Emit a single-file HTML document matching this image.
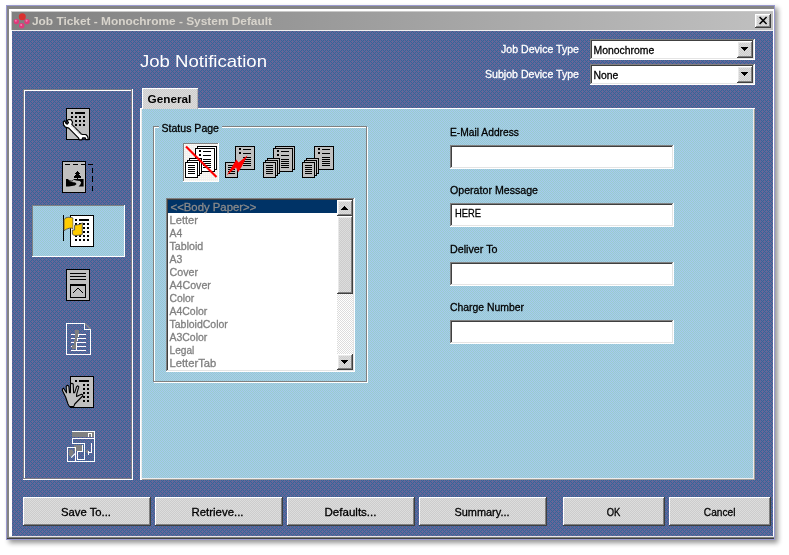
<!DOCTYPE html>
<html><head><meta charset="utf-8"><title>Job Ticket</title>
<style>
html,body{margin:0;padding:0;background:#fff;}
body{width:789px;height:555px;overflow:hidden;position:relative;}
svg{will-change:transform;position:absolute;left:0;top:0;display:block}
text{font-family:"Liberation Sans",sans-serif;white-space:pre;stroke-width:.3px}
</style></head><body>
<svg width="789" height="555" viewBox="0 0 789 555" shape-rendering="crispEdges">
<defs>
<pattern id="pb" x="12" y="31" width="4" height="4" patternUnits="userSpaceOnUse"><rect width="4" height="4" fill="#666699"/><path d="M0 0h1v1h-1zM1 1h1v1h-1zM2 2h1v1h-1zM3 3h1v1h-1zM1 3h1v1h-1zM3 1h1v1h-1z" fill="#336699"/></pattern>
<pattern id="pc" width="2" height="2" patternUnits="userSpaceOnUse"><rect width="2" height="2" fill="#a6caf0"/><path d="M0 0h1v1h-1zM1 1h1v1h-1z" fill="#99cccc"/></pattern>
<pattern id="pg" width="2" height="2" patternUnits="userSpaceOnUse"><rect width="2" height="2" fill="#cccccc"/><path d="M0 0h1v1h-1zM1 1h1v1h-1z" fill="#dddddd"/></pattern>
<pattern id="ps" width="2" height="2" patternUnits="userSpaceOnUse"><rect width="2" height="2" fill="#f0f0f0"/><path d="M0 0h1v1h-1z" fill="#fffbf0"/></pattern>
<pattern id="pt" width="2" height="2" patternUnits="userSpaceOnUse"><rect width="2" height="2" fill="#ffffff"/><path d="M0 0h1v1h-1zM1 1h1v1h-1z" fill="#dcdcdc"/></pattern>
<linearGradient id="tg" x1="0" x2="1" y1="0" y2="0"><stop offset="0" stop-color="#808080"/><stop offset="1" stop-color="#c0c0c0"/></linearGradient>
<filter id="sh" x="-5%" y="-5%" width="110%" height="110%"><feGaussianBlur stdDeviation="2.5"/></filter>
</defs>
<rect x="9" y="8" width="769" height="535" fill="#000" opacity=".42" filter="url(#sh)" shape-rendering="auto"/>
<rect x="6" y="5" width="769" height="535" fill="#9a9ace"/>
<rect x="7" y="6" width="767" height="533" fill="#848484"/>
<rect x="7" y="538" width="767" height="1" fill="#404040"/>
<rect x="7" y="537" width="767" height="1" fill="#808080"/>
<rect x="9" y="9" width="765" height="527" fill="#fff"/>
<rect x="9" y="536" width="765" height="1" fill="#e8e8e8"/>
<rect x="11" y="11" width="762" height="19" fill="#c8c8c8"/>
<rect x="12" y="12" width="761" height="18" fill="url(#tg)"/>
<rect x="12" y="30" width="761" height="1" fill="#f0f0f0"/>
<rect x="12" y="31" width="761" height="505" fill="url(#pb)"/>
<g shape-rendering="auto"><circle cx="22.3" cy="16.7" r="3.5" fill="#d93030"/><circle cx="16.4" cy="21.6" r="2.7" fill="#e03a7a"/><circle cx="27" cy="21.6" r="2.7" fill="#e03a7a"/><circle cx="21.7" cy="25.8" r="2.7" fill="#e03a7a"/><circle cx="15.8" cy="20.8" r="1" fill="#f080b0"/><circle cx="26.6" cy="20.8" r="1" fill="#f080b0"/><circle cx="21.2" cy="25" r="1" fill="#f080b0"/></g>
<text x="32" y="25" font-size="11" fill="#d8d4cc" font-weight="bold" textLength="240" lengthAdjust="spacingAndGlyphs">Job Ticket - Monochrome - System Default</text>
<rect x="755" y="14" width="16" height="14" fill="#404040"/>
<rect x="755" y="14" width="15" height="13" fill="#fff"/>
<rect x="756" y="15" width="14" height="12" fill="#808080"/>
<rect x="756" y="15" width="13" height="11" fill="#e8e8e8"/>
<rect x="757" y="16" width="12" height="10" fill="url(#pg)"/>
<path d="M759.6 17 L766.6 24 M766.6 17 L759.6 24" stroke="#000" stroke-width="1.45" fill="none" shape-rendering="auto"/>
<text x="140" y="67" font-size="17" fill="#fff" textLength="127" lengthAdjust="spacingAndGlyphs">Job Notification</text>
<text x="579" y="53" font-size="11" fill="#fff" stroke="#fff" text-anchor="end" textLength="78" lengthAdjust="spacingAndGlyphs">Job Device Type</text>
<text x="579" y="78" font-size="11" fill="#fff" stroke="#fff" text-anchor="end" textLength="94" lengthAdjust="spacingAndGlyphs">Subjob Device Type</text>
<rect x="590" y="39" width="165" height="21" fill="#fff"/>
<rect x="590" y="39" width="164" height="20" fill="#808080"/>
<rect x="591" y="40" width="163" height="19" fill="#e4e4e4"/>
<rect x="591" y="40" width="162" height="18" fill="#404040"/>
<rect x="592" y="41" width="161" height="17" fill="#fff"/>
<rect x="737" y="41" width="16" height="17" fill="#404040"/>
<rect x="737" y="41" width="15" height="16" fill="#fff"/>
<rect x="738" y="42" width="14" height="15" fill="#808080"/>
<rect x="738" y="42" width="13" height="14" fill="#e8e8e8"/>
<rect x="739" y="43" width="12" height="13" fill="url(#pg)"/>
<path d="M741 47 h7 l-3.5 4z" fill="#000"/>
<text x="593.5" y="54" font-size="11" fill="#000" stroke="#000" textLength="60.7" lengthAdjust="spacingAndGlyphs">Monochrome</text>
<rect x="590" y="64" width="165" height="21" fill="#fff"/>
<rect x="590" y="64" width="164" height="20" fill="#808080"/>
<rect x="591" y="65" width="163" height="19" fill="#e4e4e4"/>
<rect x="591" y="65" width="162" height="18" fill="#404040"/>
<rect x="592" y="66" width="161" height="17" fill="#fff"/>
<rect x="737" y="66" width="16" height="17" fill="#404040"/>
<rect x="737" y="66" width="15" height="16" fill="#fff"/>
<rect x="738" y="67" width="14" height="15" fill="#808080"/>
<rect x="738" y="67" width="13" height="14" fill="#e8e8e8"/>
<rect x="739" y="68" width="12" height="13" fill="url(#pg)"/>
<path d="M741 72 h7 l-3.5 4z" fill="#000"/>
<text x="593.5" y="79" font-size="11" fill="#000" stroke="#000" textLength="24.8" lengthAdjust="spacingAndGlyphs">None</text>
<rect x="24" y="90" width="109" height="1" fill="#fff"/>
<rect x="23" y="479" width="110" height="1" fill="#fff"/>
<rect x="24" y="90" width="1" height="390" fill="#fff"/>
<rect x="132" y="89" width="1" height="391" fill="#fff"/>
<rect x="23" y="89" width="109" height="1" fill="#7c7c84"/>
<rect x="23" y="89" width="1" height="390" fill="#7c7c84"/>
<rect x="23" y="478" width="109" height="1" fill="#7c7c84"/>
<rect x="131" y="89" width="1" height="390" fill="#7c7c84"/>
<rect x="32" y="205" width="93" height="52" fill="#fff"/>
<rect x="32" y="205" width="92" height="51" fill="#808080"/>
<rect x="33" y="206" width="91" height="50" fill="url(#pc)"/>
<rect x="142" y="88" width="56" height="21" fill="#fff"/>
<rect x="143" y="89" width="55" height="20" fill="#b0b0b0"/>
<rect x="143" y="89" width="54" height="20" fill="url(#pg)"/>
<text x="147.6" y="103" font-size="11" fill="#000" font-weight="bold" textLength="43.8" lengthAdjust="spacingAndGlyphs">General</text>
<rect x="140" y="108" width="2" height="372" fill="#fff"/>
<rect x="198" y="108" width="557" height="1" fill="#fff"/>
<rect x="140" y="108" width="3" height="1" fill="#fff"/>
<rect x="142" y="109" width="613" height="371" fill="#a09c94"/>
<rect x="141" y="109" width="613" height="370" fill="#ececec"/>
<rect x="142" y="109" width="611" height="369" fill="url(#pc)"/>
<rect x="143" y="88" width="54" height="1" fill="#fff"/>
<rect x="154" y="127" width="1" height="256" fill="#fff"/>
<rect x="367" y="127" width="1" height="256" fill="#fff"/>
<rect x="154" y="382" width="214" height="1" fill="#fff"/>
<rect x="154" y="127" width="5" height="1" fill="#fff"/>
<rect x="222" y="127" width="146" height="1" fill="#fff"/>
<rect x="153" y="126" width="1" height="256" fill="#808080"/>
<rect x="366" y="126" width="1" height="256" fill="#808080"/>
<rect x="153" y="381" width="214" height="1" fill="#808080"/>
<rect x="153" y="126" width="6" height="1" fill="#808080"/>
<rect x="222" y="126" width="145" height="1" fill="#808080"/>
<text x="161.5" y="132" font-size="11" fill="#000" stroke="#000" textLength="57.5" lengthAdjust="spacingAndGlyphs">Status Page</text>
<rect x="166" y="198" width="189" height="174" fill="#fff"/>
<rect x="166" y="198" width="188" height="173" fill="#808080"/>
<rect x="167" y="199" width="187" height="172" fill="#e4e4e4"/>
<rect x="167" y="199" width="186" height="171" fill="#404040"/>
<rect x="168" y="200" width="185" height="170" fill="#fff"/>
<rect x="168" y="200" width="169" height="13" fill="#003366"/>
<text x="170.5" y="211" font-size="11" fill="#8a8a8a" stroke="#8a8a8a" textLength="85.8" lengthAdjust="spacingAndGlyphs">&lt;&lt;Body Paper&gt;&gt;</text>
<text x="169.5" y="224" font-size="11" fill="#808080" stroke="#808080" textLength="28.5" lengthAdjust="spacingAndGlyphs">Letter</text>
<text x="169.5" y="237" font-size="11" fill="#808080" stroke="#808080" textLength="12.8" lengthAdjust="spacingAndGlyphs">A4</text>
<text x="169.5" y="250" font-size="11" fill="#808080" stroke="#808080" textLength="33.8" lengthAdjust="spacingAndGlyphs">Tabloid</text>
<text x="169.5" y="263" font-size="11" fill="#808080" stroke="#808080" textLength="12.8" lengthAdjust="spacingAndGlyphs">A3</text>
<text x="169.5" y="276" font-size="11" fill="#808080" stroke="#808080" textLength="28.5" lengthAdjust="spacingAndGlyphs">Cover</text>
<text x="169.5" y="289" font-size="11" fill="#808080" stroke="#808080" textLength="41.4" lengthAdjust="spacingAndGlyphs">A4Cover</text>
<text x="169.5" y="302" font-size="11" fill="#808080" stroke="#808080" textLength="24.8" lengthAdjust="spacingAndGlyphs">Color</text>
<text x="169.5" y="315" font-size="11" fill="#808080" stroke="#808080" textLength="37.8" lengthAdjust="spacingAndGlyphs">A4Color</text>
<text x="169.5" y="328" font-size="11" fill="#808080" stroke="#808080" textLength="58.3" lengthAdjust="spacingAndGlyphs">TabloidColor</text>
<text x="169.5" y="341" font-size="11" fill="#808080" stroke="#808080" textLength="37.8" lengthAdjust="spacingAndGlyphs">A3Color</text>
<text x="169.5" y="354" font-size="11" fill="#808080" stroke="#808080" textLength="24.8" lengthAdjust="spacingAndGlyphs">Legal</text>
<text x="169.5" y="367" font-size="11" fill="#808080" stroke="#808080" textLength="46.8" lengthAdjust="spacingAndGlyphs">LetterTab</text>
<rect x="337" y="200" width="16" height="170" fill="url(#pt)"/>
<rect x="337" y="200" width="16" height="16" fill="#404040"/>
<rect x="337" y="200" width="15" height="15" fill="#fff"/>
<rect x="338" y="201" width="14" height="14" fill="#808080"/>
<rect x="338" y="201" width="13" height="13" fill="#e8e8e8"/>
<rect x="339" y="202" width="12" height="12" fill="url(#pg)"/>
<path d="M341 210 h7 l-3.5 -4z" fill="#000"/>
<rect x="337" y="354" width="16" height="16" fill="#404040"/>
<rect x="337" y="354" width="15" height="15" fill="#fff"/>
<rect x="338" y="355" width="14" height="14" fill="#808080"/>
<rect x="338" y="355" width="13" height="13" fill="#e8e8e8"/>
<rect x="339" y="356" width="12" height="12" fill="url(#pg)"/>
<path d="M341 360 h7 l-3.5 4z" fill="#000"/>
<rect x="337" y="216" width="16" height="78" fill="#404040"/>
<rect x="337" y="216" width="15" height="77" fill="#fff"/>
<rect x="338" y="217" width="14" height="76" fill="#808080"/>
<rect x="338" y="217" width="13" height="75" fill="#e8e8e8"/>
<rect x="339" y="218" width="12" height="74" fill="url(#pg)"/>
<text x="450" y="136" font-size="11" fill="#000" stroke="#000" textLength="69" lengthAdjust="spacingAndGlyphs">E-Mail Address</text>
<rect x="450" y="145" width="224" height="24" fill="#fff"/>
<rect x="450" y="145" width="223" height="23" fill="#808080"/>
<rect x="451" y="146" width="222" height="22" fill="#e4e4e4"/>
<rect x="451" y="146" width="221" height="21" fill="#404040"/>
<rect x="452" y="147" width="220" height="20" fill="#fff"/>
<text x="450" y="194" font-size="11" fill="#000" stroke="#000" textLength="88" lengthAdjust="spacingAndGlyphs">Operator Message</text>
<rect x="450" y="203" width="224" height="24" fill="#fff"/>
<rect x="450" y="203" width="223" height="23" fill="#808080"/>
<rect x="451" y="204" width="222" height="22" fill="#e4e4e4"/>
<rect x="451" y="204" width="221" height="21" fill="#404040"/>
<rect x="452" y="205" width="220" height="20" fill="#fff"/>
<text x="455" y="217" font-size="11" fill="#000" stroke="#000" textLength="26" lengthAdjust="spacingAndGlyphs">HERE</text>
<text x="450" y="253" font-size="11" fill="#000" stroke="#000" textLength="47.5" lengthAdjust="spacingAndGlyphs">Deliver To</text>
<rect x="450" y="262" width="224" height="24" fill="#fff"/>
<rect x="450" y="262" width="223" height="23" fill="#808080"/>
<rect x="451" y="263" width="222" height="22" fill="#e4e4e4"/>
<rect x="451" y="263" width="221" height="21" fill="#404040"/>
<rect x="452" y="264" width="220" height="20" fill="#fff"/>
<text x="450" y="311" font-size="11" fill="#000" stroke="#000" textLength="74" lengthAdjust="spacingAndGlyphs">Charge Number</text>
<rect x="450" y="320" width="224" height="24" fill="#fff"/>
<rect x="450" y="320" width="223" height="23" fill="#808080"/>
<rect x="451" y="321" width="222" height="22" fill="#e4e4e4"/>
<rect x="451" y="321" width="221" height="21" fill="#404040"/>
<rect x="452" y="322" width="220" height="20" fill="#fff"/>
<rect x="23" y="497" width="128" height="29" fill="#404040"/>
<rect x="23" y="497" width="127" height="28" fill="#fff"/>
<rect x="24" y="498" width="126" height="27" fill="#808080"/>
<rect x="24" y="498" width="125" height="26" fill="url(#pg)"/>
<text x="86" y="516" font-size="11" fill="#000" stroke="#000" text-anchor="middle" textLength="50" lengthAdjust="spacingAndGlyphs">Save To...</text>
<rect x="155" y="497" width="128" height="29" fill="#404040"/>
<rect x="155" y="497" width="127" height="28" fill="#fff"/>
<rect x="156" y="498" width="126" height="27" fill="#808080"/>
<rect x="156" y="498" width="125" height="26" fill="url(#pg)"/>
<text x="217.5" y="516" font-size="11" fill="#000" stroke="#000" text-anchor="middle" textLength="52" lengthAdjust="spacingAndGlyphs">Retrieve...</text>
<rect x="287" y="497" width="128" height="29" fill="#404040"/>
<rect x="287" y="497" width="127" height="28" fill="#fff"/>
<rect x="288" y="498" width="126" height="27" fill="#808080"/>
<rect x="288" y="498" width="125" height="26" fill="url(#pg)"/>
<text x="350.5" y="516" font-size="11" fill="#000" stroke="#000" text-anchor="middle" textLength="52" lengthAdjust="spacingAndGlyphs">Defaults...</text>
<rect x="419" y="497" width="128" height="29" fill="#404040"/>
<rect x="419" y="497" width="127" height="28" fill="#fff"/>
<rect x="420" y="498" width="126" height="27" fill="#808080"/>
<rect x="420" y="498" width="125" height="26" fill="url(#pg)"/>
<text x="482" y="516" font-size="11" fill="#000" stroke="#000" text-anchor="middle" textLength="55" lengthAdjust="spacingAndGlyphs">Summary...</text>
<rect x="563" y="497" width="102" height="29" fill="#404040"/>
<rect x="563" y="497" width="101" height="28" fill="#fff"/>
<rect x="564" y="498" width="100" height="27" fill="#808080"/>
<rect x="564" y="498" width="99" height="26" fill="url(#pg)"/>
<text x="613.5" y="516" font-size="11" fill="#000" stroke="#000" text-anchor="middle" textLength="13.6" lengthAdjust="spacingAndGlyphs">OK</text>
<rect x="669" y="497" width="102" height="29" fill="#404040"/>
<rect x="669" y="497" width="101" height="28" fill="#fff"/>
<rect x="670" y="498" width="100" height="27" fill="#808080"/>
<rect x="670" y="498" width="99" height="26" fill="url(#pg)"/>
<text x="719.6" y="516" font-size="11" fill="#000" stroke="#000" text-anchor="middle" textLength="31.6" lengthAdjust="spacingAndGlyphs">Cancel</text>
<rect x="183" y="143" width="36" height="39" fill="#fff"/>
<rect x="183" y="143" width="35" height="38" fill="#808080"/>
<rect x="184" y="144" width="34" height="37" fill="url(#ps)"/>
<rect x="197" y="146" width="20" height="24" fill="#000"/>
<rect x="198" y="147" width="18" height="22" fill="#fff"/>
<rect x="195" y="148" width="20" height="24" fill="#000"/>
<rect x="196" y="149" width="18" height="22" fill="#fff"/>
<rect x="199" y="150" width="2" height="2" fill="#000"/>
<rect x="203" y="151" width="8" height="1" fill="#000"/>
<rect x="199" y="154" width="2" height="2" fill="#000"/>
<rect x="203" y="155" width="8" height="1" fill="#000"/>
<rect x="203" y="159" width="8" height="1" fill="#000"/>
<rect x="203" y="161" width="8" height="1" fill="#000"/>
<rect x="203" y="163" width="8" height="1" fill="#000"/>
<rect x="203" y="165" width="8" height="1" fill="#000"/>
<rect x="203" y="167" width="8" height="1" fill="#000"/>
<rect x="189" y="158" width="13" height="16" fill="#000"/>
<rect x="190" y="159" width="11" height="14" fill="#fff"/>
<rect x="187" y="160" width="13" height="16" fill="#000"/>
<rect x="188" y="161" width="11" height="14" fill="#fff"/>
<rect x="185" y="162" width="13" height="16" fill="#000"/>
<rect x="186" y="163" width="11" height="14" fill="#fff"/>
<rect x="188" y="165" width="7" height="1" fill="#000"/>
<rect x="188" y="167" width="7" height="1" fill="#000"/>
<rect x="188" y="169" width="7" height="1" fill="#000"/>
<rect x="188" y="171" width="7" height="1" fill="#000"/>
<rect x="188" y="173" width="7" height="1" fill="#000"/>
<path d="M186 146.5 L216.5 177" stroke="#ff0000" stroke-width="2.2" fill="none" shape-rendering="auto"/>
<rect x="235" y="146" width="20" height="24" fill="#000"/>
<rect x="236" y="147" width="18" height="22" fill="#c0c0c0"/>
<rect x="239" y="148" width="2" height="2" fill="#000"/>
<rect x="243" y="149" width="8" height="1" fill="#000"/>
<rect x="239" y="152" width="2" height="2" fill="#000"/>
<rect x="243" y="153" width="8" height="1" fill="#000"/>
<rect x="243" y="157" width="8" height="1" fill="#000"/>
<rect x="243" y="159" width="8" height="1" fill="#000"/>
<rect x="243" y="161" width="8" height="1" fill="#000"/>
<rect x="243" y="163" width="8" height="1" fill="#000"/>
<rect x="243" y="165" width="8" height="1" fill="#000"/>
<rect x="225" y="162" width="13" height="16" fill="#000"/>
<rect x="226" y="163" width="11" height="14" fill="#c0c0c0"/>
<rect x="228" y="165" width="7" height="1" fill="#000"/>
<rect x="228" y="167" width="7" height="1" fill="#000"/>
<rect x="228" y="169" width="7" height="1" fill="#000"/>
<rect x="228" y="171" width="7" height="1" fill="#000"/>
<rect x="228" y="173" width="7" height="1" fill="#000"/>
<path d="M247.6 155.2 L238.6 162.6 L236.3 159.6 L226.8 175.2 L236 167.6 L238.2 172.2 L241.8 166.4Z" fill="#ff0000" shape-rendering="auto"/>
<rect x="275" y="146" width="20" height="24" fill="#000"/>
<rect x="276" y="147" width="18" height="22" fill="#c0c0c0"/>
<rect x="273" y="148" width="20" height="24" fill="#000"/>
<rect x="274" y="149" width="18" height="22" fill="#c0c0c0"/>
<rect x="277" y="150" width="2" height="2" fill="#000"/>
<rect x="281" y="151" width="8" height="1" fill="#000"/>
<rect x="277" y="154" width="2" height="2" fill="#000"/>
<rect x="281" y="155" width="8" height="1" fill="#000"/>
<rect x="281" y="159" width="8" height="1" fill="#000"/>
<rect x="281" y="161" width="8" height="1" fill="#000"/>
<rect x="281" y="163" width="8" height="1" fill="#000"/>
<rect x="281" y="165" width="8" height="1" fill="#000"/>
<rect x="281" y="167" width="8" height="1" fill="#000"/>
<rect x="267" y="158" width="13" height="16" fill="#000"/>
<rect x="268" y="159" width="11" height="14" fill="#c0c0c0"/>
<rect x="265" y="160" width="13" height="16" fill="#000"/>
<rect x="266" y="161" width="11" height="14" fill="#c0c0c0"/>
<rect x="263" y="162" width="13" height="16" fill="#000"/>
<rect x="264" y="163" width="11" height="14" fill="#c0c0c0"/>
<rect x="266" y="165" width="7" height="1" fill="#000"/>
<rect x="266" y="167" width="7" height="1" fill="#000"/>
<rect x="266" y="169" width="7" height="1" fill="#000"/>
<rect x="266" y="171" width="7" height="1" fill="#000"/>
<rect x="266" y="173" width="7" height="1" fill="#000"/>
<rect x="314" y="146" width="20" height="24" fill="#000"/>
<rect x="315" y="147" width="18" height="22" fill="#c0c0c0"/>
<rect x="318" y="148" width="2" height="2" fill="#000"/>
<rect x="322" y="149" width="8" height="1" fill="#000"/>
<rect x="318" y="152" width="2" height="2" fill="#000"/>
<rect x="322" y="153" width="8" height="1" fill="#000"/>
<rect x="322" y="157" width="8" height="1" fill="#000"/>
<rect x="322" y="159" width="8" height="1" fill="#000"/>
<rect x="322" y="161" width="8" height="1" fill="#000"/>
<rect x="322" y="163" width="8" height="1" fill="#000"/>
<rect x="322" y="165" width="8" height="1" fill="#000"/>
<rect x="306" y="158" width="13" height="16" fill="#000"/>
<rect x="307" y="159" width="11" height="14" fill="#c0c0c0"/>
<rect x="304" y="160" width="13" height="16" fill="#000"/>
<rect x="305" y="161" width="11" height="14" fill="#c0c0c0"/>
<rect x="302" y="162" width="13" height="16" fill="#000"/>
<rect x="303" y="163" width="11" height="14" fill="#c0c0c0"/>
<rect x="305" y="165" width="7" height="1" fill="#000"/>
<rect x="305" y="167" width="7" height="1" fill="#000"/>
<rect x="305" y="169" width="7" height="1" fill="#000"/>
<rect x="305" y="171" width="7" height="1" fill="#000"/>
<rect x="305" y="173" width="7" height="1" fill="#000"/>
<rect x="66" y="108" width="24" height="32" fill="#000"/>
<rect x="67" y="109" width="22" height="30" fill="#c0c0c0"/>
<rect x="71" y="112" width="2" height="2" fill="#000"/>
<rect x="75" y="112" width="10" height="2" fill="#000"/>
<rect x="71" y="116" width="2" height="2" fill="#000"/>
<rect x="75" y="116" width="2" height="2" fill="#000"/>
<rect x="79" y="116" width="2" height="2" fill="#000"/>
<rect x="83" y="116" width="2" height="2" fill="#000"/>
<rect x="75" y="120" width="2" height="2" fill="#000"/>
<rect x="79" y="120" width="2" height="2" fill="#000"/>
<rect x="83" y="120" width="2" height="2" fill="#000"/>
<rect x="75" y="124" width="2" height="2" fill="#000"/>
<rect x="79" y="124" width="2" height="2" fill="#000"/>
<rect x="83" y="124" width="2" height="2" fill="#000"/>
<path d="M63.3 122 L64.8 120.6 L65.7 123 L67.2 124.2 L68.5 122.6 L67.1 120.6 L68.2 119.7 L71 119.7 L72.5 122 L71.9 124.6 L81.2 134 L82.6 134.5 L85.8 134.5 L87.6 136.4 L88.4 139.7 L85.8 139.7 L85.2 137.8 L82.6 137.8 L82 139.8 L79.2 139.8 L78.4 137.8 L68.8 128.2 L65.4 127.2 L63.6 125Z" fill="#fff" stroke="#000" stroke-width="1.2" stroke-linejoin="round" shape-rendering="auto"/>
<path d="M65.6 121.2 L66.3 123 L67.2 123.6 L67.9 122.6 L66.8 120.8Z M82.9 138.2 H85 L85.5 139.9 H82.3Z" fill="#101020" shape-rendering="auto"/>
<path d="M71 126.2 L79.6 134.8 M72.6 125.6 L80.6 133.6" stroke="#b0b0b0" stroke-width=".7" stroke-dasharray="1 1" shape-rendering="auto"/>
<rect x="62" y="161" width="24" height="32" fill="#000"/>
<rect x="63" y="162" width="22" height="30" fill="#c0c0c0"/>
<rect x="65" y="164" width="5" height="1" fill="#000"/>
<rect x="73" y="164" width="5" height="1" fill="#000"/>
<rect x="81" y="164" width="5" height="1" fill="#000"/>
<rect x="88" y="164" width="5" height="1" fill="#000"/>
<rect x="92" y="168" width="1" height="5" fill="#000"/>
<rect x="92" y="176" width="1" height="6" fill="#000"/>
<rect x="92" y="186" width="1" height="5" fill="#000"/>
<rect x="77" y="171" width="1" height="1" fill="#000"/>
<rect x="76" y="172" width="3" height="1" fill="#000"/>
<rect x="75" y="173" width="5" height="1" fill="#000"/>
<rect x="76" y="174" width="3" height="1" fill="#000"/>
<rect x="75" y="175" width="5" height="1" fill="#000"/>
<rect x="74" y="176" width="7" height="1" fill="#000"/>
<rect x="74" y="177" width="7" height="1" fill="#000"/>
<rect x="77" y="178" width="1" height="1" fill="#000"/>
<path d="M66 179 h2 l1 1.2 l3 .6 l2 -1.8 h9.6 v7.4 h-5 l1.6 -1.6 l1 -2.2 l-1.4 -1.6 l-3.6 -.4 l-2.6 -.8 l-1.4 1.6 l-3 -.2 l2.4 .9 l3.6 .5 l1.4 1.3 l-1.8 1.5 l-6 1 l-2.8 .2z" fill="#000" shape-rendering="auto"/>
<rect x="70" y="215" width="24" height="32" fill="#000"/>
<rect x="71" y="216" width="22" height="30" fill="#fff"/>
<rect x="75" y="219" width="2" height="2" fill="#000"/>
<rect x="79" y="219" width="10" height="2" fill="#000"/>
<rect x="75" y="223" width="2" height="2" fill="#000"/>
<rect x="79" y="223" width="2" height="2" fill="#000"/>
<rect x="83" y="223" width="2" height="2" fill="#000"/>
<rect x="87" y="223" width="2" height="2" fill="#000"/>
<rect x="75" y="227" width="2" height="2" fill="#000"/>
<rect x="79" y="227" width="2" height="2" fill="#000"/>
<rect x="83" y="227" width="2" height="2" fill="#000"/>
<rect x="87" y="227" width="2" height="2" fill="#000"/>
<rect x="75" y="231" width="2" height="2" fill="#000"/>
<rect x="79" y="231" width="2" height="2" fill="#000"/>
<rect x="83" y="231" width="2" height="2" fill="#000"/>
<rect x="87" y="231" width="2" height="2" fill="#000"/>
<rect x="75" y="235" width="2" height="2" fill="#000"/>
<rect x="79" y="235" width="2" height="2" fill="#000"/>
<rect x="83" y="235" width="2" height="2" fill="#000"/>
<rect x="87" y="235" width="2" height="2" fill="#000"/>
<rect x="75" y="239" width="2" height="2" fill="#000"/>
<rect x="79" y="239" width="2" height="2" fill="#000"/>
<rect x="83" y="239" width="2" height="2" fill="#000"/>
<rect x="87" y="239" width="2" height="2" fill="#000"/>
<rect x="63" y="215" width="1" height="26" fill="#000"/>
<path d="M64 219.8 C65 218 66.6 217.3 68.6 217.3 C70.6 217.3 72 217.4 73 218.2 L73.2 228.6 C71.8 228 70.4 227.9 69.4 228.2 C68 228.6 67 229 66.4 229.2 C65.6 229.6 64.8 230.2 64 230.8Z" fill="#ffcc00" stroke="#505050" stroke-width=".9" shape-rendering="auto"/>
<path d="M73.9 218.6 L73.9 228.8" stroke="#fff" stroke-width="1" shape-rendering="auto"/>
<path d="M74.6 225.2 C76.4 224.6 78 225 79.6 224.4 C81 223.8 81.8 223.2 82.3 222.8 L82.3 234.4 C80.6 235.4 78.8 235 77 235.4 C75 235.8 73.6 235.2 72.4 234.2 L72.4 230 L74.6 230Z" fill="#ffcc00" stroke="#505050" stroke-width=".9" shape-rendering="auto"/>
<rect x="66" y="269" width="24" height="32" fill="#000"/>
<rect x="67" y="270" width="22" height="30" fill="#c0c0c0"/>
<rect x="70" y="273" width="16" height="1" fill="#000"/>
<rect x="70" y="276" width="16" height="1" fill="#000"/>
<rect x="70" y="279" width="16" height="1" fill="#000"/>
<rect x="70" y="284" width="16" height="14" fill="#000"/>
<rect x="71" y="286" width="14" height="11" fill="#c0c0c0"/>
<path d="M73 293 L78 288 L83 293" stroke="#000" stroke-width="1" fill="none" shape-rendering="auto"/>
<rect x="66" y="323" width="1" height="32" fill="#fff"/>
<rect x="66" y="323" width="19" height="1" fill="#fff"/>
<rect x="66" y="354" width="25" height="1" fill="#fff"/>
<rect x="90" y="329" width="1" height="26" fill="#fff"/>
<rect x="84" y="323" width="1" height="7" fill="#fff"/>
<rect x="84" y="329" width="7" height="1" fill="#fff"/>
<path d="M85 323.5 L90.5 329" stroke="#8c8c8c" stroke-width="1.3" shape-rendering="auto"/>
<rect x="75" y="330" width="4" height="5" fill="#808080"/>
<rect x="75" y="335" width="3" height="5" fill="#808080"/>
<rect x="74" y="340" width="3" height="5" fill="#808080"/>
<rect x="72" y="345" width="4" height="4" fill="#808080"/>
<rect x="71" y="334" width="4" height="1" fill="#fff"/>
<rect x="71" y="338" width="4" height="1" fill="#fff"/>
<rect x="71" y="342" width="3" height="1" fill="#fff"/>
<rect x="71" y="346" width="1" height="1" fill="#fff"/>
<rect x="71" y="350" width="15" height="1" fill="#fff"/>
<rect x="79" y="334" width="7" height="1" fill="#fff"/>
<rect x="78" y="334" width="1" height="3" fill="#fff"/>
<rect x="77" y="338" width="9" height="1" fill="#fff"/>
<rect x="77" y="338" width="1" height="3" fill="#fff"/>
<rect x="77" y="342" width="9" height="1" fill="#fff"/>
<rect x="76" y="342" width="1" height="4" fill="#fff"/>
<rect x="76" y="346" width="10" height="1" fill="#fff"/>
<rect x="76" y="346" width="1" height="4" fill="#fff"/>
<rect x="70" y="376" width="24" height="32" fill="#000"/>
<rect x="71" y="377" width="22" height="30" fill="#c0c0c0"/>
<rect x="75" y="380" width="2" height="2" fill="#000"/>
<rect x="79" y="380" width="10" height="2" fill="#000"/>
<rect x="83" y="384" width="2" height="2" fill="#000"/>
<rect x="87" y="384" width="2" height="2" fill="#000"/>
<rect x="83" y="388" width="2" height="2" fill="#000"/>
<rect x="87" y="388" width="2" height="2" fill="#000"/>
<rect x="83" y="392" width="2" height="2" fill="#000"/>
<rect x="87" y="392" width="2" height="2" fill="#000"/>
<rect x="83" y="396" width="2" height="2" fill="#000"/>
<rect x="87" y="396" width="2" height="2" fill="#000"/>
<rect x="83" y="400" width="2" height="2" fill="#000"/>
<rect x="87" y="400" width="2" height="2" fill="#000"/>
<path d="M62.4 389.2 L63.6 388.2 L66.5 392.8 L66.2 386.2 L67.4 385.3 L68.8 386 L69.5 392.6 L70.4 392.6 L70.5 384 L71.8 383.2 L73.2 384 L73.6 392.8 L74.7 392.6 L76.6 386.6 L77.8 385.8 L78.8 386.8 L76.6 394.4 L76.6 396.4 L81.4 394.2 L82.8 394.8 L82.6 396 L74.8 404 L73.8 406.4 L69.4 406.6 L68 404 L65.6 397 L62.4 390.4Z" fill="#c0c0c0" stroke="#000" stroke-width="1.1" stroke-linejoin="round" shape-rendering="auto"/>
<rect x="72" y="431" width="23" height="1" fill="#fff"/>
<rect x="94" y="431" width="1" height="31" fill="#fff"/>
<rect x="67" y="461" width="28" height="1" fill="#fff"/>
<rect x="72" y="432" width="22" height="5" fill="#808080"/>
<rect x="88" y="433" width="4" height="1" fill="#fff"/>
<rect x="88" y="433" width="1" height="4" fill="#fff"/>
<rect x="91" y="433" width="1" height="4" fill="#fff"/>
<rect x="72" y="438" width="22" height="1" fill="#fff"/>
<rect x="72" y="438" width="1" height="6" fill="#fff"/>
<rect x="72" y="443" width="13" height="1" fill="#fff"/>
<rect x="84" y="443" width="1" height="17" fill="#fff"/>
<rect x="74" y="445" width="8" height="6" fill="#808080"/>
<rect x="82" y="445" width="1" height="7" fill="#fff"/>
<rect x="77" y="451" width="6" height="1" fill="#fff"/>
<rect x="77" y="451" width="1" height="9" fill="#fff"/>
<rect x="77" y="459" width="8" height="1" fill="#fff"/>
<rect x="67" y="447" width="1" height="14" fill="#fff"/>
<rect x="67" y="447" width="9" height="1" fill="#fff"/>
<rect x="75" y="447" width="1" height="14" fill="#fff"/>
<path d="M69 449.5 h3 l1.6 2 v2 l-3 3.4 l-1.6 -1.6z" fill="#808080" shape-rendering="auto"/>
<path d="M71.2 457.6 L75 453.6" stroke="#fff" stroke-width="1.2" shape-rendering="auto"/>
<rect x="91" y="443" width="1" height="10" fill="#fff"/>
<rect x="88" y="452" width="4" height="1" fill="#fff"/>
<rect x="88" y="451" width="1" height="4" fill="#fff"/>
<path d="M88 449.2 v4.2 l-2.8 -2.1z" fill="#808080" shape-rendering="auto"/>
</svg>
</body></html>
